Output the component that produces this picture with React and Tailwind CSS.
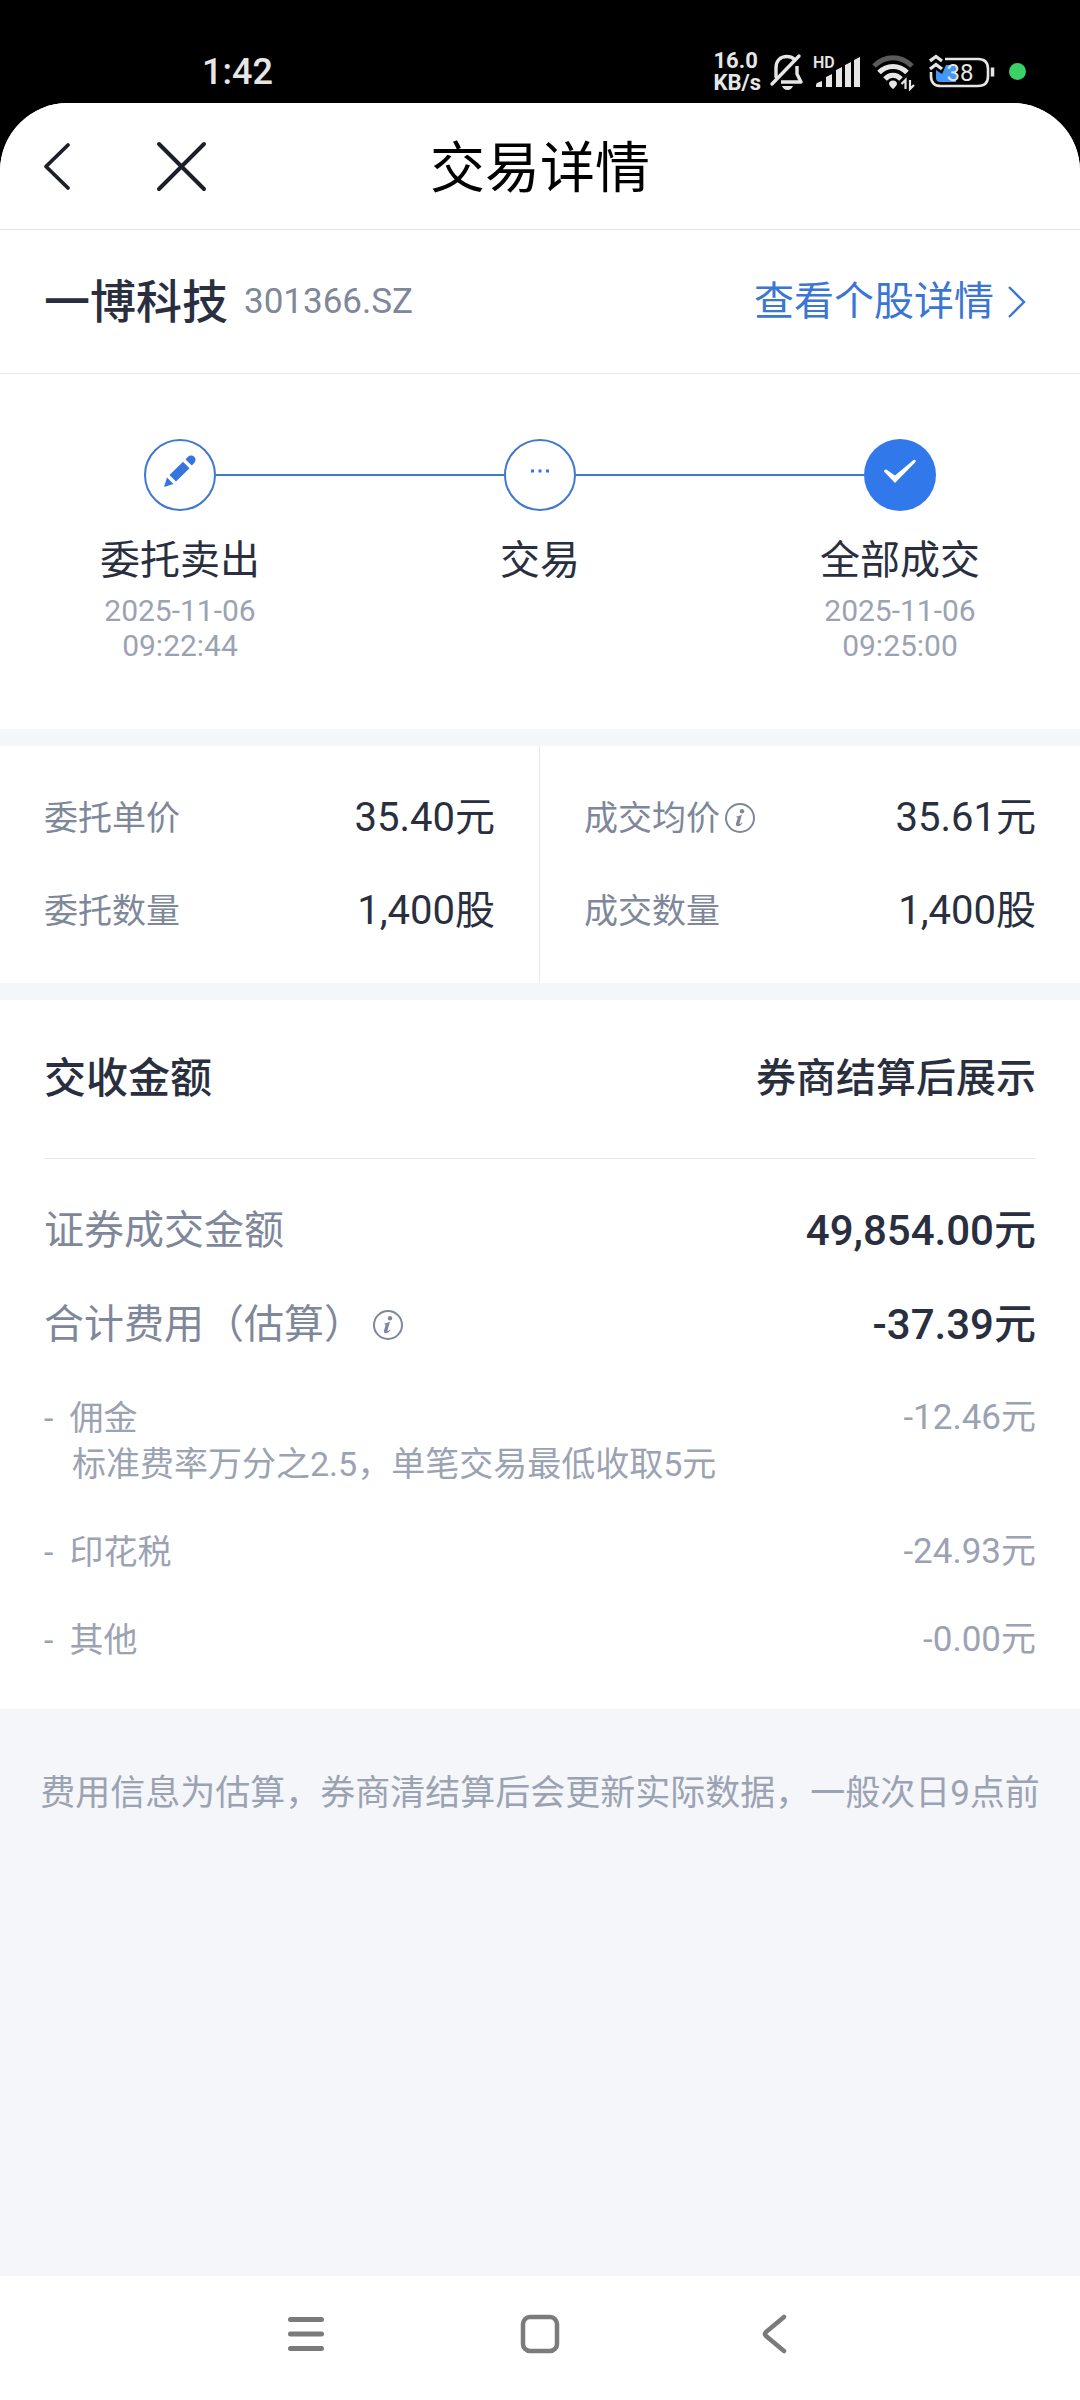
import React from "react";

// Fees shown under the estimated total
const fees = [
  { name: "佣金", amount: "-12.46元", note: "标准费率万分之2.5，单笔交易最低收取5元" },
  { name: "印花税", amount: "-24.93元" },
  { name: "其他", amount: "-0.00元" },
];

const InfoIcon = () => (
  <svg viewBox="0 0 32 32" className="h-8 w-8" fill="none">
    <circle cx="16" cy="16" r="14" stroke="currentColor" strokeWidth="2" />
    <circle cx="18" cy="9.2" r="2.2" fill="currentColor" />
    <path
      d="M12.400 14.400c2-.2 3.800-.8 5.600-1.900l-2.500 8.900c-.2.900.3.900 1 .3l1.300-1.200.6.600c-1.500 2.200-3 3.100-4.500 3.100-1.700 0-2.300-1.100-1.900-2.700l1.500-5c.2-.8 0-1.100-1.200-1.200z"
      fill="currentColor"
    />
  </svg>
);

const StatusBar = () => (
  <div className="flex h-[103px] items-center justify-between pt-10 pr-[54px] pl-[202px] text-[#e6e6e6]">
    <span className="text-[36px] leading-[48px] font-medium">1:42</span>
    <div className="flex items-center">
      <div className="mr-2 text-[22px] leading-[22px] font-bold">
        <p>16.0</p>
        <p>KB/s</p>
      </div>
      {/* Muted bell */}
      <svg viewBox="0 0 36 38" className="mr-2 h-[38px] w-9" fill="none" stroke="currentColor" strokeWidth="3.400">
        <path d="M7 24V15C7 8 11 3.500 18 3.500c3 0 5.500 1 7 2.500" strokeLinecap="round" />
        <path d="M28 13v8l4 8H12" strokeLinejoin="round" />
        <path d="M3 31L30 3" strokeLinecap="round" />
        <path d="M13 33h11c-1 2.500-3 4-5.500 4S14 35.500 13 33z" fill="currentColor" stroke="none" />
      </svg>
      {/* Mobile signal */}
      <svg viewBox="0 0 48 38" className="mr-2.5 h-[38px] w-12" fill="currentColor">
        <text x="0" y="15" fontSize="16" fontWeight="600">HD</text>
        <path d="M3 34v-2q0-2 2-2.500l4-1.500v6zM13 24l6-3v13h-6zM23 17l6-3v20h-6zM32 12l6-3v25h-6zM41 7l6-3v30h-6z" />
      </svg>
      {/* Wi-Fi */}
      <svg viewBox="0 0 44 38" className="mr-3.5 h-[38px] w-11" fill="none" stroke="currentColor" strokeWidth="5">
        <path d="M3 13c11-11 27-11 38 0" stroke="#5a5a5a" />
        <path d="M8 19.500c8-8 20-8 28 0" />
        <path d="M14 26c5-5 11-5 16 0" />
        <path d="M22 27.500c-2.500 0-4 1.500-4 3.200 0 1.800 2 3.300 4 5.300 2-2 4-3.500 4-5.300 0-1.700-1.500-3.200-4-3.200z" fill="currentColor" stroke="none" />
        <path d="M34.500 36v-9l-4 4M39 27v9l4-4" strokeWidth="2.200" />
      </svg>
      {/* Battery */}
      <svg viewBox="0 0 68 38" className="mr-3 h-[38px] w-[68px]" fill="none">
        <path d="M16 6h33q10 0 10 10v7q0 10-10 10H12Q2 33 2 23v-4" stroke="currentColor" strokeWidth="2.600" />
        <path d="M63.500 14.500v9" stroke="currentColor" strokeWidth="3.500" />
        <path d="M7 17l6 4 4-9h10v17H11q-4 0-4-4z" fill="#4397f7" />
        <path d="M1 8l6-4.500L13 8M1 16l6-4.500 6 4.500" stroke="currentColor" strokeWidth="3.400" />
        <text x="31" y="28" fontSize="24" textAnchor="middle" fill="currentColor">38</text>
      </svg>
      <span className="h-[17px] w-[17px] rounded-full bg-[#3ad267]" />
    </div>
  </div>
);

const Header = () => (
  <header className="grid h-[127px] grid-cols-3 items-center border-b border-[#e2e2e3]">
    <div className="flex items-center gap-[76px] pl-[38px]">
      <button type="button" aria-label="返回" className="text-[#1a1f2a]">
        <svg viewBox="0 0 40 56" className="h-14 w-10" fill="none" stroke="currentColor" strokeWidth="3.800" strokeLinecap="round" strokeLinejoin="round">
          <path d="M30 7L8 28.500l22 21.500" />
        </svg>
      </button>
      <button type="button" aria-label="关闭" className="text-[#1a1f2a]">
        <svg viewBox="0 0 56 56" className="h-14 w-14" fill="none" stroke="currentColor" strokeWidth="4" strokeLinecap="round">
          <path d="M5 6l45 45M50 6L5 51" />
        </svg>
      </button>
    </div>
    <h1 className="pt-1 text-center text-[55px] leading-[64px] text-black">交易详情</h1>
  </header>
);

const Step = ({ label, date, time, first, last, children }) => (
  <li className="flex-1">
    <div className="flex items-center text-[#3475e0]">
      <span className={first ? "flex-1" : "h-[2px] flex-1 bg-[#4078cc]"} />
      <span
        className={
          last
            ? "flex h-[72px] w-[72px] items-center justify-center rounded-full bg-[#3178ea] text-white"
            : "flex h-[72px] w-[72px] items-center justify-center rounded-full border-2 border-[#4078cc]"
        }
      >
        {children}
      </span>
      <span className={last ? "flex-1" : "h-[2px] flex-1 bg-[#4078cc]"} />
    </div>
    <p className="mt-[26px] text-center text-[40px] leading-[48px] text-[#292f3f]">{label}</p>
    {date && (
      <p className="mt-2 text-center text-[30px] leading-[35px] text-[#9ba3b3]">
        {date}
        <br />
        {time}
      </p>
    )}
  </li>
);

const Field = ({ label, value, info }) => (
  <div className="flex items-center justify-between">
    <dt className="flex items-center gap-1 text-[34px] leading-[48px] text-[#7e889a]">
      {label}
      {info && (
        <button type="button" aria-label="成交均价说明">
          <InfoIcon />
        </button>
      )}
    </dt>
    <dd className="text-[40px] leading-[48px] text-[#292f3f]">{value}</dd>
  </div>
);

const App = () => {
  return (
    <div className="min-h-screen bg-black font-[Roboto,'Noto_Sans_CJK_SC',sans-serif]">
      <div className="flex min-h-screen flex-col">
        <StatusBar />
        <main className="flex flex-1 flex-col overflow-hidden rounded-t-[68px] bg-[#f4f6fa]">
          <div className="bg-white">
            <Header />
            {/* Stock */}
            <section className="flex h-36 items-center justify-between border-b border-[#e8e9eb] pr-[54px] pl-11">
              <div className="flex items-center gap-4">
                <h2 className="text-[46px] leading-[56px] font-medium text-[#292f3f]">一博科技</h2>
                <span className="text-[35px] leading-[56px] text-[#7e889a]">301366.SZ</span>
              </div>
              <a href="#stock" className="flex items-center gap-3 text-[40px] leading-[56px] text-[#3a76d2]">
                查看个股详情
                <svg viewBox="0 0 20 36" className="h-9 w-5" fill="none" stroke="currentColor" strokeWidth="2.400">
                  <path d="M3 3l15 15L3 33" />
                </svg>
              </a>
            </section>
            {/* Order progress */}
            <ol className="flex pt-[65px] pb-[66px]">
              <Step label="委托卖出" date="2025-11-06" time="09:22:44" first>
                <svg viewBox="0 0 34 34" className="mb-2 h-[34px] w-[34px]" fill="currentColor">
                  <path d="M1 33l3-9.500 6.500 6.500zM6.500 21L20 7.800l6.500 6.500L13 27.500zM22.500 5.500l2.500-2.700c2-2 4.500-1.600 6.200 0s2 4.200 0 6.200l-2.400 2.600z" />
                </svg>
              </Step>
              <Step label="交易">
                <svg viewBox="0 0 20 4" className="mb-2 h-1 w-5" fill="currentColor">
                  <path d="M1 .5h3v3H1zM8.500 .5h3v3h-3zM16 .5h3v3h-3z" />
                </svg>
              </Step>
              <Step label="全部成交" date="2025-11-06" time="09:25:00" last>
                <svg viewBox="0 0 34 26" className="mb-2 h-[26px] w-[34px]" fill="currentColor">
                  <path d="M1 13.500c0-1.500 1.800-2.600 3-1.600L12 17.500 30.500 2c1.500-1 3 .6 2 2L12 25z" />
                </svg>
              </Step>
            </ol>
          </div>

          {/* Entrusted vs. filled */}
          <section className="mt-[17px] grid grid-cols-2 bg-white">
            <dl className="flex flex-col gap-[45px] border-r border-[#e8e9eb] px-11 py-12">
              <Field label="委托单价" value="35.40元" />
              <Field label="委托数量" value="1,400股" />
            </dl>
            <dl className="flex flex-col gap-[45px] px-11 py-12">
              <Field label="成交均价" value="35.61元" info />
              <Field label="成交数量" value="1,400股" />
            </dl>
          </section>

          {/* Settlement */}
          <section className="mt-[17px] bg-white px-11 pb-[46px]">
            <div className="flex items-center justify-between border-b border-[#e8e9eb] py-[55px] leading-[48px] font-medium text-[#292f3f]">
              <h3 className="text-[42px]">交收金额</h3>
              <p className="text-[40px]">券商结算后展示</p>
            </div>
            <dl className="flex flex-col gap-[46px] pt-12 text-[40px] leading-[48px]">
              <div className="flex items-center justify-between">
                <dt className="text-[#7e889a]">证券成交金额</dt>
                <dd className="text-[42px] font-medium text-[#292f3f]">49,854.00元</dd>
              </div>
              <div className="flex items-center justify-between">
                <dt className="flex items-center gap-2 text-[#7e889a]">
                  合计费用（估算）
                  <button type="button" aria-label="合计费用说明">
                    <InfoIcon />
                  </button>
                </dt>
                <dd className="text-[42px] font-medium text-[#292f3f]">-37.39元</dd>
              </div>
            </dl>
            <ul className="mt-[46px] flex flex-col gap-[42px] text-[34px] leading-[46px] text-[#9ba3b3]">
              {fees.map((fee) => (
                <li key={fee.name}>
                  <div className="flex items-center justify-between">
                    <span className="flex gap-4">
                      <span>-</span>
                      {fee.name}
                    </span>
                    <span className="text-[35px]">{fee.amount}</span>
                  </div>
                  {fee.note && <p className="pl-7">{fee.note}</p>}
                </li>
              ))}
            </ul>
          </section>

          <p className="px-8 pt-[60px] text-center text-[35px] leading-[50px] text-[#9ba3b3]">
            费用信息为估算，券商清结算后会更新实际数据，一般次日9点前
          </p>
        </main>

        {/* System navigation */}
        <nav className="flex h-[124px] items-center justify-center gap-[178px] bg-white pb-2 text-[#7b7b7b]">
          <button type="button" aria-label="最近任务">
            <svg viewBox="0 0 56 56" className="h-14 w-14" fill="none" stroke="currentColor" strokeWidth="5" strokeLinecap="round">
              <path d="M12.500 13.500h31M12.500 28h31M12.500 42.500h31" />
            </svg>
          </button>
          <button type="button" aria-label="主屏幕">
            <svg viewBox="0 0 56 56" className="h-14 w-14" fill="none" stroke="currentColor" strokeWidth="4.500">
              <rect x="11" y="11" width="34" height="34" rx="7" />
            </svg>
          </button>
          <button type="button" aria-label="返回上一页">
            <svg viewBox="0 0 56 56" className="h-14 w-14" fill="none" stroke="currentColor" strokeWidth="4.500" strokeLinecap="round" strokeLinejoin="round">
              <path d="M38 11L20 26q-2 2 0 4l18 15" />
            </svg>
          </button>
        </nav>
      </div>
    </div>
  );
};

export default App;
